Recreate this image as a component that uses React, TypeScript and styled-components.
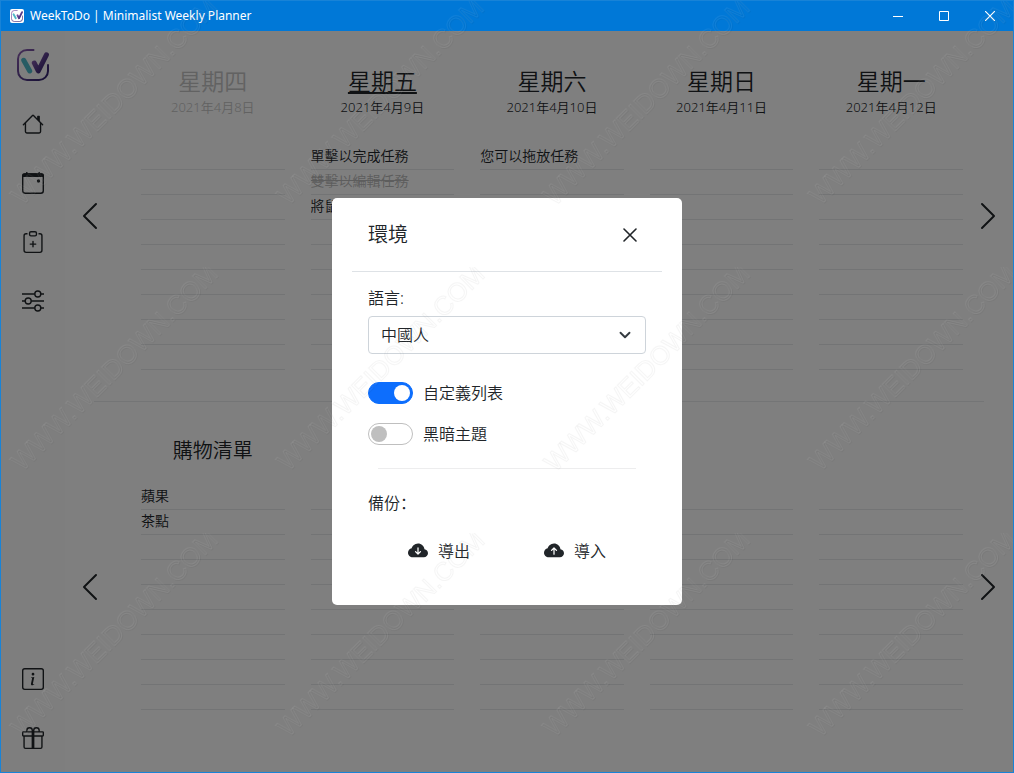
import React from "react";
import styled, { createGlobalStyle, css } from "styled-components";
import {
  BsChevronLeft,
  BsChevronRight,
  BsClipboardPlus,
  BsCloudArrowDownFill,
  BsCloudArrowUpFill,
  BsGift,
  BsHouse,
  BsInfoSquare,
} from "react-icons/bs";

const GlobalStyle = createGlobalStyle`
  *, *::before, *::after { box-sizing: border-box; }
  body {
    margin: 0;
    color: #212529;
    background: #fff;
    font-family: "Noto Sans", "Noto Sans CJK SC", sans-serif;
    font-size: 16px;
    font-weight: 350;
    line-height: 24px;
  }
  button, select { font: inherit; color: inherit; }
  h1, h2, p, ul { margin: 0; padding: 0; font-weight: inherit; }
`;

const Window = styled.div`
  position: relative;
  display: flex;
  flex-direction: column;
  min-height: 100vh;
  border: 1px solid #1883d7;
  overflow: hidden;
`;

const TitleBar = styled.header`
  display: flex;
  align-items: center;
  height: 30px;
  padding-left: 9px;
  gap: 6px;
  color: #fff;
  background: #0078d7;
  font-size: 12px;
  font-weight: 400;
`;

const AppName = styled.span`
  flex: 1;
`;

const WindowControls = styled.div`
  display: flex;
`;

const WindowButton = styled.button`
  display: grid;
  place-items: center;
  width: 46px;
  height: 30px;
  padding: 0;
  border: 0;
  background: none;
`;

const AppIcon = styled.span`
  display: grid;
  place-items: center;
  width: 14px;
  height: 14px;
  border-radius: 2px;
  background: #fff;
`;

const Body = styled.div`
  position: relative;
  flex: 1;
  display: flex;
`;

const Sidebar = styled.nav`
  display: flex;
  flex-direction: column;
  align-items: center;
  width: 64px;
  padding: 18px 0 23px;
  gap: 37px;
  background: #fcfcfc;
`;

const SideLink = styled.a<{ $last?: boolean }>`
  display: flex;
  color: inherit;
  ${(p) => p.$last && css`margin-top: auto;`}
`;

const LogoLink = styled(SideLink)`
  margin-bottom: -5px;
`;

const Main = styled.main`
  flex: 1;
  display: flex;
  flex-direction: column;
`;

const Board = styled.section`
  flex: 1 0 0;
  display: flex;
  align-items: center;
  padding-left: 9px;
`;

const Divider = styled.hr`
  width: calc(100% - 58px);
  height: 1px;
  margin: 0 0 0 29px;
  border: 0;
  background: #e9ebed;
`;

const ArrowButton = styled.button<{ $side: "left" | "right" }>`
  display: flex;
  padding: 0;
  border: 0;
  background: none;
  ${(p) => (p.$side === "left" ? css`margin-right: 22px;` : css`margin: 0 9px 0 -4px;`)}
`;

const Columns = styled.div`
  flex: 1;
  align-self: stretch;
  display: grid;
  grid-template-columns: repeat(5, 1fr);
`;

const Column = styled.div`
  padding: 0 13px;
`;

const ColumnHead = styled.div<{ $muted?: boolean }>`
  display: flex;
  flex-direction: column;
  align-items: center;
  height: 114px;
  padding-top: 35px;
  gap: 1px;
  color: ${(p) => (p.$muted ? "#c4c4c4" : "inherit")};
`;

const ListHead = styled(ColumnHead)`
  height: 83px;
  padding-top: 37px;
`;

const DayName = styled.h2<{ $today?: boolean }>`
  font-size: 23px;
  line-height: 30px;
  ${(p) =>
    p.$today &&
    css`
      text-decoration: underline;
      text-decoration-thickness: 2px;
      text-underline-offset: 2px;
    `}
`;

const DateText = styled.span`
  font-size: 13px;
  line-height: 20px;
`;

const ListName = styled.h2`
  font-size: 20px;
  line-height: 24px;
`;

const Rows = styled.ul`
  list-style: none;
`;

const Row = styled.li<{ $done?: boolean }>`
  height: 25px;
  border-bottom: 1px solid #e6e8ea;
  font-size: 14px;
  line-height: 22px;
  white-space: nowrap;
  overflow: hidden;
  ${(p) =>
    p.$done &&
    css`
      color: #bababa;
      text-decoration: line-through;
    `}
`;

const Backdrop = styled.div`
  position: absolute;
  inset: 0;
  display: grid;
  place-items: center;
  background: rgba(0, 0, 0, 0.5);
`;

const Dialog = styled.div`
  width: 350px;
  max-width: 100%;
  padding: 0 20px 38px;
  border-radius: 5px;
  background: #fff;
`;

const DialogHead = styled.div`
  display: flex;
  align-items: center;
  justify-content: space-between;
  height: 74px;
  padding: 0 16px;
  border-bottom: 1px solid #dee2e6;
`;

const DialogTitle = styled.h1`
  font-size: 20px;
  line-height: 30px;
`;

const CloseButton = styled.button`
  display: grid;
  place-items: center;
  width: 32px;
  height: 32px;
  padding: 0;
  border: 0;
  background: none;
`;

const DialogBody = styled.div`
  display: flex;
  flex-direction: column;
  padding: 14px 16px 0;
`;

const FieldLabel = styled.label`
  margin-bottom: 6px;
`;

const SelectWrap = styled.div`
  position: relative;
  margin-bottom: 28px;
`;

const Select = styled.select`
  display: block;
  width: 100%;
  height: 38px;
  padding: 0 36px 0 12px;
  border: 1px solid #ced4da;
  border-radius: 4px;
  background: #fff;
  appearance: none;
`;

const SelectArrow = styled.svg`
  position: absolute;
  right: 15px;
  top: 13px;
  pointer-events: none;
`;

const SwitchRow = styled.label`
  display: flex;
  align-items: center;
  gap: 10px;
  height: 22px;
  margin-bottom: 19px;
`;

const Switch = styled.input`
  appearance: none;
  display: flex;
  align-items: center;
  width: 45px;
  height: 22px;
  margin: 0;
  padding: 0 2px;
  border: 1px solid #bfbfbf;
  border-radius: 11px;
  &::before {
    content: "";
    width: 16px;
    height: 16px;
    border-radius: 50%;
    background: #bfbfbf;
  }
  &:checked {
    justify-content: flex-end;
    border-color: #0d6efd;
    background: #0d6efd;
  }
  &:checked::before {
    background: #fff;
  }
`;

const Separator = styled.hr`
  width: calc(100% - 20px);
  height: 1px;
  margin: 4px auto 22px;
  border: 0;
  background: #ededee;
`;

const Actions = styled.div`
  display: grid;
  grid-template-columns: 1fr 1fr;
  padding: 0 3px;
  margin-top: 20px;
`;

const ActionButton = styled.button`
  display: flex;
  align-items: center;
  justify-content: center;
  gap: 10px;
  height: 32px;
  padding: 0;
  border: 0;
  background: none;
`;

const WatermarkLayer = styled.svg`
  position: absolute;
  inset: 0;
  width: 100%;
  height: 100%;
  pointer-events: none;
`;

function Logo({ size }: { size: number }) {
  return (
    <svg width={size} height={size} viewBox="0 0 32 32" fill="none" strokeLinecap="round" strokeLinejoin="round">
      <defs>
        <linearGradient id="frame" x1="0" y1="0" x2="1" y2="1">
          <stop offset="0" stopColor="#8c5fb0" />
          <stop offset="1" stopColor="#2c1f6a" />
        </linearGradient>
      </defs>
      <path
        d="M16.500 1H10A9 9 0 0 0 1 10v12a9 9 0 0 0 9 9h12a9 9 0 0 0 9-9v-6"
        stroke="url(#frame)"
        strokeWidth="2"
      />
      <path d="M6.700 11.300L12.700 22" stroke="#4fb8c8" strokeWidth="5" />
      <path d="M17.300 14L21.300 22L29.400 5.800" stroke="url(#frame)" strokeWidth="5" />
    </svg>
  );
}

function CalendarIcon() {
  return (
    <svg width="22" height="22" viewBox="0 0 22 22" fill="none" stroke="currentColor">
      <rect x="0.700" y="1.900" width="20.600" height="19.400" rx="2.500" strokeWidth="1.400" />
      <path d="M0 5V3.500Q0 1.200 2.500 1.200H19.500Q22 1.200 22 3.500V5z" fill="currentColor" stroke="none" />
      <path d="M4.800 0v2M17.200 0v2" strokeWidth="1.400" />
      <circle cx="16.500" cy="9" r="1.700" fill="currentColor" stroke="none" />
    </svg>
  );
}

function SlidersIcon() {
  return (
    <svg width="22" height="22" viewBox="0 0 22 22" fill="none" stroke="currentColor" strokeWidth="1.400">
      <circle cx="15.800" cy="4" r="3" />
      <circle cx="6.200" cy="11" r="3" />
      <circle cx="15.800" cy="18" r="3" />
      <path d="M0 4h12.800M18.800 4H22M0 11h3.200M9.200 11H22M0 18h12.800M18.800 18H22" />
    </svg>
  );
}

function Watermark() {
  const mark = (dx: number, dy: number, stroke: string) => (
    <text
      transform={`translate(${21 + dx} ${205 + dy}) rotate(-45)`}
      fontFamily="Liberation Sans, sans-serif"
      fontSize="26"
      fill="none"
      stroke={stroke}
    >
      WWW.WEIDOWN.COM
    </text>
  );
  return (
    <WatermarkLayer aria-hidden="true">
      <defs>
        <pattern id="mark" width="266" height="266" patternUnits="userSpaceOnUse">
          {mark(1, 1, "rgba(0,0,0,0.04)")}
          {mark(0, 0, "rgba(255,255,255,0.06)")}
        </pattern>
      </defs>
      <rect width="100%" height="100%" fill="url(#mark)" />
    </WatermarkLayer>
  );
}

type Task = { text: string; done?: boolean };
type Day = { name: string; date: string; past?: boolean; today?: boolean; tasks: Task[] };

const days: Day[] = [
  { name: "星期四", date: "2021年4月8日", past: true, tasks: [] },
  {
    name: "星期五",
    date: "2021年4月9日",
    today: true,
    tasks: [{ text: "單擊以完成任務" }, { text: "雙擊以編輯任務", done: true }, { text: "將鼠標懸停以刪除" }],
  },
  { name: "星期六", date: "2021年4月10日", tasks: [{ text: "您可以拖放任務" }] },
  { name: "星期日", date: "2021年4月11日", tasks: [] },
  { name: "星期一", date: "2021年4月12日", tasks: [] },
];

const lists: { name: string; tasks: Task[] }[] = [
  { name: "購物清單", tasks: [{ text: "蘋果" }, { text: "茶點" }] },
  { name: "", tasks: [] },
  { name: "", tasks: [] },
  { name: "", tasks: [] },
  { name: "", tasks: [] },
];

const ROW_COUNT = 9;

function TaskRows({ tasks }: { tasks: Task[] }) {
  return (
    <Rows>
      {Array.from({ length: ROW_COUNT }, (_, i) => (
        <Row key={i} $done={tasks[i]?.done}>
          {tasks[i]?.text}
        </Row>
      ))}
    </Rows>
  );
}

function PagedBoard({ children }: { children: React.ReactNode }) {
  return (
    <Board>
      <ArrowButton $side="left" aria-label="Previous">
        <BsChevronLeft size={32} />
      </ArrowButton>
      <Columns>{children}</Columns>
      <ArrowButton $side="right" aria-label="Next">
        <BsChevronRight size={32} />
      </ArrowButton>
    </Board>
  );
}

function SettingsDialog() {
  return (
    <Dialog role="dialog" aria-labelledby="settings-title">
      <DialogHead>
        <DialogTitle id="settings-title">環境</DialogTitle>
        <CloseButton aria-label="Close">
          <svg width="14" height="14" viewBox="0 0 14 14" stroke="currentColor" strokeWidth="1.600" strokeLinecap="round">
            <path d="M1 1l12 12M13 1L1 13" />
          </svg>
        </CloseButton>
      </DialogHead>
      <DialogBody>
        <FieldLabel htmlFor="language">語言:</FieldLabel>
        <SelectWrap>
          <Select id="language">
            <option>中國人</option>
          </Select>
          <SelectArrow width="12" height="12" viewBox="0 0 16 16" fill="none" stroke="#343a40" strokeWidth="2.500" strokeLinecap="round" strokeLinejoin="round">
            <path d="M2 5l6 6 6-6" />
          </SelectArrow>
        </SelectWrap>
        <SwitchRow>
          <Switch type="checkbox" role="switch" defaultChecked />
          自定義列表
        </SwitchRow>
        <SwitchRow>
          <Switch type="checkbox" role="switch" />
          黑暗主題
        </SwitchRow>
        <Separator />
        <p>備份：</p>
        <Actions>
          <ActionButton>
            <BsCloudArrowDownFill size={20} />
            導出
          </ActionButton>
          <ActionButton>
            <BsCloudArrowUpFill size={20} />
            導入
          </ActionButton>
        </Actions>
      </DialogBody>
    </Dialog>
  );
}

export default function App() {
  return (
    <Window lang="zh">
      <GlobalStyle />
      <TitleBar>
        <AppIcon>
          <Logo size={12} />
        </AppIcon>
        <AppName>WeekToDo | Minimalist Weekly Planner</AppName>
        <WindowControls>
          <WindowButton aria-label="Minimize">
            <svg width="10" height="10" stroke="#fff"><path d="M0 5.500h10" /></svg>
          </WindowButton>
          <WindowButton aria-label="Maximize">
            <svg width="10" height="10" stroke="#fff" fill="none"><path d="M.5 .5h9v9h-9z" /></svg>
          </WindowButton>
          <WindowButton aria-label="Close window">
            <svg width="10" height="10" stroke="#fff" strokeWidth="1.200"><path d="M0 0l10 10M10 0L0 10" /></svg>
          </WindowButton>
        </WindowControls>
      </TitleBar>
      <Body>
        <Sidebar>
          <LogoLink href="#" aria-label="WeekToDo">
            <Logo size={32} />
          </LogoLink>
          <SideLink href="#" aria-label="Home"><BsHouse size={22} /></SideLink>
          <SideLink href="#" aria-label="Calendar"><CalendarIcon /></SideLink>
          <SideLink href="#" aria-label="New list"><BsClipboardPlus size={22} /></SideLink>
          <SideLink href="#" aria-label="Settings"><SlidersIcon /></SideLink>
          <SideLink href="#" aria-label="About" $last><BsInfoSquare size={22} /></SideLink>
          <SideLink href="#" aria-label="Donate"><BsGift size={22} /></SideLink>
        </Sidebar>
        <Main>
          <PagedBoard>
            {days.map((d) => (
              <Column key={d.name}>
                <ColumnHead $muted={d.past}>
                  <DayName $today={d.today}>{d.name}</DayName>
                  <DateText>{d.date}</DateText>
                </ColumnHead>
                <TaskRows tasks={d.tasks} />
              </Column>
            ))}
          </PagedBoard>
          <Divider />
          <PagedBoard>
            {lists.map((l, i) => (
              <Column key={i}>
                <ListHead>{l.name && <ListName>{l.name}</ListName>}</ListHead>
                <TaskRows tasks={l.tasks} />
              </Column>
            ))}
          </PagedBoard>
        </Main>
        <Backdrop>
          <SettingsDialog />
        </Backdrop>
      </Body>
      <Watermark />
    </Window>
  );
}
